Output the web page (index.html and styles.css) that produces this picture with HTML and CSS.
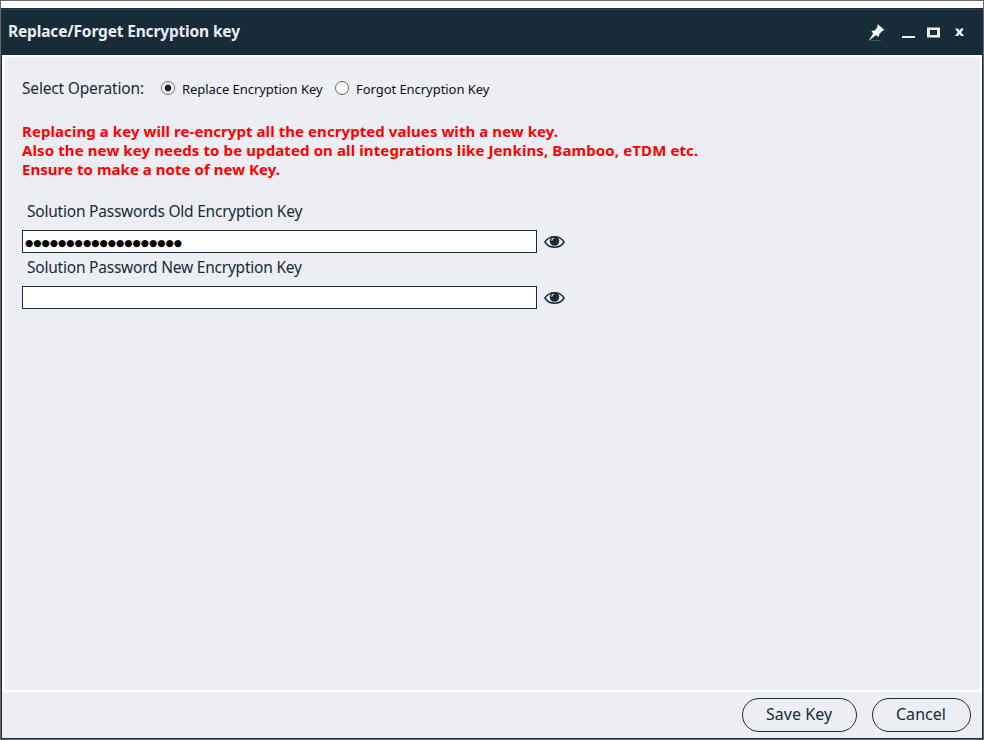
FILE: index.html
```html
<!DOCTYPE html>
<html lang="en">
<head>
<meta charset="utf-8">
<title>Replace/Forget Encryption key</title>
<link rel="stylesheet" href="styles.css">
</head>
<body>
<svg class="defs" width="0" height="0" aria-hidden="true">
  <symbol id="eye" viewBox="0 0 22 14">
    <path d="M1 7C5.500-.3 16.500-.3 21 7C16.500 14.300 5.500 14.300 1 7Z" fill="#f4f4f8" stroke="#172b38" stroke-width="1.500"/>
    <circle cx="11" cy="6" r="5" fill="#172b38"/>
    <path d="M8 5.600Q8.200 3.200 10.400 2.900" fill="none" stroke="#d8dce2" stroke-width="1.200"/>
  </symbol>
</svg>
<div class="window">
  <header class="titlebar">
    <h1 class="title"><span>Replace/Forget Encryption key</span></h1>
    <svg class="controls" width="104" height="24" viewBox="0 0 104 24">
      <path d="M11.500 3L18.500 9L16.500 9.800L13.200 13.200L13 16L9.800 14.300L2.500 20L7.200 12.500L5.300 10L8.800 9.500L11.500 6Z" fill="#fff"/>
      <path d="M5 19.500H15" stroke="#526370" stroke-width=".7"/>
      <path d="M36 15H49V17H36Z" fill="#f1f2f6"/>
      <path d="M61 6.500H74V16.500H61ZM64 9V14H71V9Z" fill="#f1f2f6" fill-rule="evenodd"/>
      <path d="M89 7.500H92L93.500 9.500L95 7.500H98L95.200 11.200L98 15H95L93.500 13L92 15H89L91.800 11.200Z" fill="#f1f2f6"/>
    </svg>
  </header>
  <main class="content">
    <div class="operation">
      <span class="operation-label"><span>Select Operation:</span></span>
      <label class="choice choice-replace"><span class="radio checked"></span><span class="choice-text">Replace Encryption Key</span></label>
      <label class="choice"><span class="radio"></span><span class="choice-text">Forgot Encryption Key</span></label>
    </div>
    <div class="warning">
      <div class="reencrypt">Replacing a key will re-encrypt all the encrypted values with a new key.</div>
      <div class="integrations">Also the new key needs to be updated on all integrations like Jenkins, Bamboo, eTDM etc.</div>
      <div>Ensure to make a note of new Key.</div>
    </div>
    <div class="field">
      <div class="field-label">Solution Passwords Old Encryption Key</div>
      <div class="field-row"><div class="box">●●●●●●●●●●●●●●●●●●●</div><svg class="eye" width="21" height="14"><use href="#eye"/></svg></div>
    </div>
    <div class="field">
      <div class="field-label">Solution Password New Encryption Key</div>
      <div class="field-row"><div class="box"></div><svg class="eye" width="21" height="14"><use href="#eye"/></svg></div>
    </div>
  </main>
  <footer class="footer">
    <button class="button save" type="button">Save Key</button>
    <button class="button cancel" type="button">Cancel</button>
  </footer>
</div>
</body>
</html>
```
FILE: styles.css
```css
* { box-sizing: border-box; }
body {
  margin: 0;
  height: 740px;
  padding-top: 7px;
  overflow: hidden;
  background: #fff;
  border: 1px solid #68686c;
  font-family: "Noto Sans", "Open Sans", sans-serif;
  color: #172b38;
  white-space: nowrap;
}
.defs { display: block; height: 0; }
.window {
  height: 731px;
  display: flex;
  flex-direction: column;
  background: #edeef3;
  border: 1px solid #172b38;
}
.titlebar {
  height: 46px;
  flex: none;
  display: flex;
  align-items: center;
  justify-content: space-between;
  padding: 0 12px 0 6px;
  background: #172b38;
  border-top: 1px solid #2c414d;
}
.title {
  margin: 0;
  padding-bottom: 3px;
  font-size: 15.5px;
  line-height: 20px;
  font-weight: 700;
  letter-spacing: -0.16px;
  color: #ecedf3;
}
.controls { display: block; }
.content {
  height: 637px;
  flex: none;
  border: 2px solid #fff;
  border-left-width: 3px;
  padding: 21px 17px 0;
}
.operation { display: flex; align-items: center; height: 20px; }
.operation-label { width: 139px; font-size: 15.5px; letter-spacing: -0.18px; }
.choice { display: flex; align-items: center; }
.choice-replace { width: 174px; }
.radio {
  width: 14px;
  height: 14px;
  margin-right: 7px;
  flex: none;
  border: 1px solid #626468;
  border-radius: 50%;
  background: #fff;
}
.radio.checked { background: radial-gradient(circle, #202124 0 3px, #fff 3.8px); }
.choice-text { font-size: 13px; color: #101010; letter-spacing: -0.05px; padding-top: 1px; }
.warning {
  margin-top: 24px;
  font-size: 15px;
  font-weight: 700;
  line-height: 19px;
  color: #f00;
  letter-spacing: 0.04px;
}
.reencrypt { letter-spacing: 0.07px; }
.integrations { letter-spacing: 0.11px; }
.field { height: 56px; }
.warning + .field { margin-top: 22px; }
.field-label { height: 29px; padding-left: 5px; font-size: 15.5px; line-height: 20px; letter-spacing: -0.22px; }
.field-row { display: flex; align-items: center; height: 23px; }
.box {
  width: 515px;
  height: 23px;
  padding-left: 2px;
  border: 1px solid #172b38;
  background: #fff;
  font-family: "DejaVu Sans", sans-serif;
  font-size: 9.5px;
  line-height: 23px;
  letter-spacing: -0.02px;
  color: #000;
}
.eye { margin: 1px 0 0 7px; }
.footer { display: flex; justify-content: flex-end; gap: 15px; padding: 6px 11px 0 0; }
.button {
  height: 34px;
  padding: 0 1px 3px 0;
  border: 1px solid #172b38;
  border-radius: 17px;
  background: transparent;
  color: #172b38;
  font: 16px/24px "Noto Sans", "Open Sans", sans-serif;
  letter-spacing: 0.05px;
}
.save { width: 115px; }
.cancel { width: 99px; }
```
